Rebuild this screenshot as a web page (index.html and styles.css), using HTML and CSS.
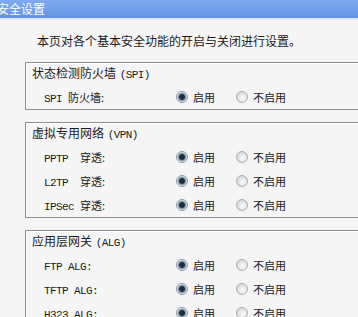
FILE: index.html
```html
<!DOCTYPE html>
<html lang="zh-CN">
<head>
<meta charset="utf-8">
<link rel="stylesheet" href="styles.css">
</head>
<body>
<div class="titlebar">安全设置</div>
<p class="desc">本页对各个基本安全功能的开启与关闭进行设置。</p>

<div class="box">
  <div class="box-title">状态检测防火墙 <span class="en">(SPI)</span></div>
  <div class="row">
    <span class="label"><span class="en">SPI </span>防火墙:</span>
    <span class="opt"><span class="radio on"></span>启用</span>
    <span class="opt"><span class="radio"></span>不启用</span>
  </div>
</div>

<div class="box">
  <div class="box-title">虚拟专用网络 <span class="en">(VPN)</span></div>
  <div class="row">
    <span class="label"><span class="en">PPTP  </span>穿透:</span>
    <span class="opt"><span class="radio on"></span>启用</span>
    <span class="opt"><span class="radio"></span>不启用</span>
  </div>
  <div class="row">
    <span class="label"><span class="en">L2TP  </span>穿透:</span>
    <span class="opt"><span class="radio on"></span>启用</span>
    <span class="opt"><span class="radio"></span>不启用</span>
  </div>
  <div class="row">
    <span class="label"><span class="en">IPSec </span>穿透:</span>
    <span class="opt"><span class="radio on"></span>启用</span>
    <span class="opt"><span class="radio"></span>不启用</span>
  </div>
</div>

<div class="box">
  <div class="box-title">应用层网关 <span class="en">(ALG)</span></div>
  <div class="row">
    <span class="label"><span class="en">FTP ALG:</span></span>
    <span class="opt"><span class="radio on"></span>启用</span>
    <span class="opt"><span class="radio"></span>不启用</span>
  </div>
  <div class="row">
    <span class="label"><span class="en">TFTP ALG:</span></span>
    <span class="opt"><span class="radio on"></span>启用</span>
    <span class="opt"><span class="radio"></span>不启用</span>
  </div>
  <div class="row">
    <span class="label"><span class="en">H323 ALG:</span></span>
    <span class="opt"><span class="radio on"></span>启用</span>
    <span class="opt"><span class="radio"></span>不启用</span>
  </div>
</div>
</body>
</html>
```

FILE: styles.css
```css
html, body {
  margin: 0;
  padding: 0;
  background: #f5f5f5;
  overflow: hidden;
}
body {
  font-family: "Noto Sans CJK SC", "Liberation Sans", sans-serif;
  color: #1a1a1a;
  font-size: 12px;
}
.titlebar {
  height: 18px;
  line-height: 18px;
  background: linear-gradient(#7eaaf0, #6394e3);
  color: #ffffff;
  font-size: 12px;
  text-indent: -3px;
  border-bottom: 2px solid #e4eaf3;
  white-space: nowrap;
}
.desc {
  margin: 13px 0 13px 37px;
  line-height: 16px;
  font-size: 12px;
  white-space: nowrap;
}
.box {
  margin: 0 -20px 12px 25px;
  border: 1px solid #8e8e8e;
  border-right: none;
  box-shadow: inset 1px 1px 0 #ffffff;
}
.box-title {
  height: 20px;
  line-height: 20px;
  padding: 0 0 2px 6px;
  font-size: 12px;
  white-space: nowrap;
}
.en {
  font-family: "Liberation Mono", monospace;
  font-size: 11px;
  letter-spacing: -0.6px;
  white-space: pre;
}
.box-title .en {
  margin-left: 1px;
}
.row {
  display: flex;
  align-items: center;
  height: 24px;
  padding-left: 18px;
  white-space: nowrap;
}
.label {
  width: 132px;
  font-size: 11px;
  color: #1a1a1a;
}
.opt {
  display: flex;
  align-items: center;
  gap: 5px;
  width: 60px;
  font-size: 11px;
}
.radio {
  width: 10px;
  height: 10px;
  border-radius: 50%;
  border: 1px solid #a7adb3;
  background: radial-gradient(circle at 60% 60%, #fbfbfb 0, #e4e6e8 45%, #c9cdd1 100%);
  flex: none;
}
.radio.on {
  border-color: #8d99a4;
  background: radial-gradient(circle, #1c2e40 0, #1c2e40 2.4px, #6f8aa0 3.4px, #cfd8df 4.6px, #eef1f3 5px);
}
```
